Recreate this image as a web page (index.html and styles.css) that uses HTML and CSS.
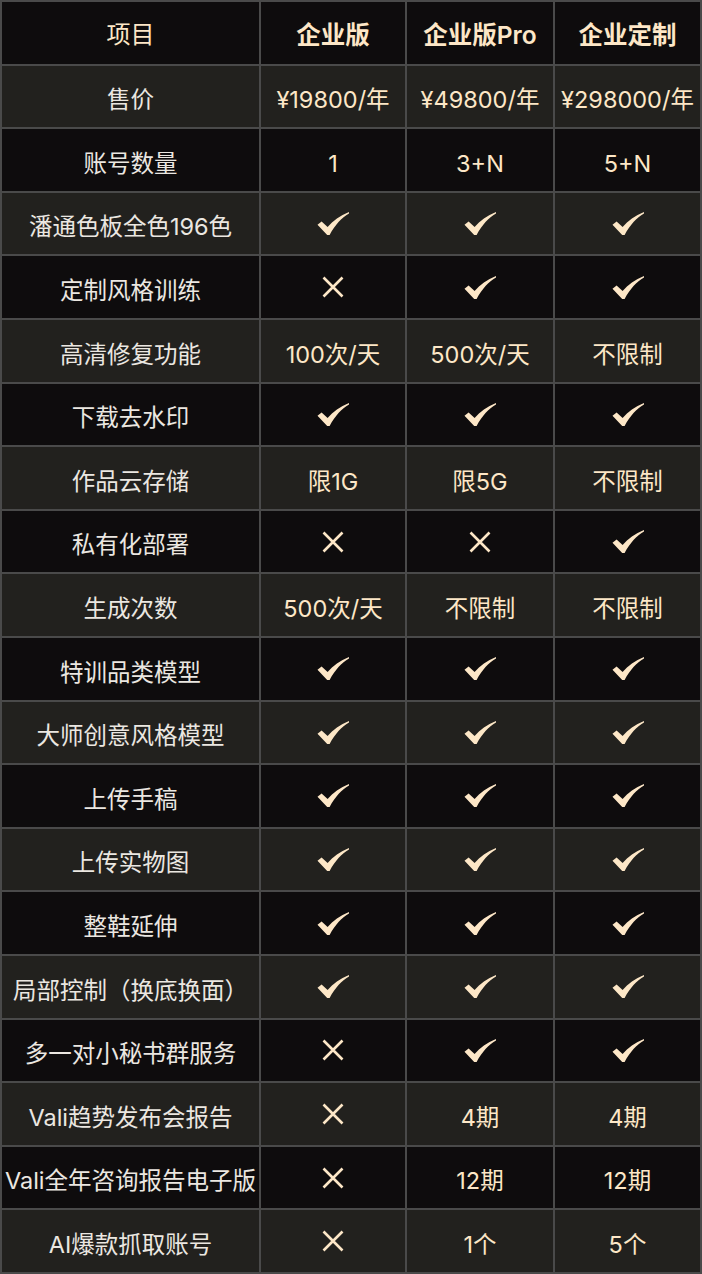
FILE: index.html
```html
<!DOCTYPE html>
<html lang="zh">
<head>
<meta charset="utf-8">
<link rel="stylesheet" href="styles.css">
<title>企业版对比</title>
</head>
<body>
<svg width="0" height="0" style="position:absolute">
  <defs>
    <symbol id="ck" viewBox="0 0 32 23">
      <path d="M0.5,12.8 L4.6,9.6 L10.6,15 C16,8.6 23,3.6 32,0 L32,1.6 C24.5,6 18,13 12.6,23 L10.2,23 Z" fill="currentColor"/>
    </symbol>
    <symbol id="xx" viewBox="0 0 22 22">
      <path d="M1.5,1.5 L20.5,20.5 M20.5,1.5 L1.5,20.5" stroke="currentColor" stroke-width="2.6" fill="none"/>
    </symbol>
  </defs>
</svg>
<div class="grid">
  <div class="row head">
    <div class="cell first">项目</div>
    <div class="cell">企业版</div>
    <div class="cell">企业版Pro</div>
    <div class="cell">企业定制</div>
  </div>
  <div class="row">
    <div class="cell first">售价</div>
    <div class="cell">¥19800/年</div>
    <div class="cell">¥49800/年</div>
    <div class="cell">¥298000/年</div>
  </div>
  <div class="row">
    <div class="cell first">账号数量</div>
    <div class="cell">1</div>
    <div class="cell">3+N</div>
    <div class="cell">5+N</div>
  </div>
  <div class="row">
    <div class="cell first">潘通色板全色196色</div>
    <div class="cell"><svg class="ck"><use href="#ck"/></svg></div>
    <div class="cell"><svg class="ck"><use href="#ck"/></svg></div>
    <div class="cell"><svg class="ck"><use href="#ck"/></svg></div>
  </div>
  <div class="row">
    <div class="cell first">定制风格训练</div>
    <div class="cell"><svg class="xx"><use href="#xx"/></svg></div>
    <div class="cell"><svg class="ck"><use href="#ck"/></svg></div>
    <div class="cell"><svg class="ck"><use href="#ck"/></svg></div>
  </div>
  <div class="row">
    <div class="cell first">高清修复功能</div>
    <div class="cell">100次/天</div>
    <div class="cell">500次/天</div>
    <div class="cell">不限制</div>
  </div>
  <div class="row">
    <div class="cell first">下载去水印</div>
    <div class="cell"><svg class="ck"><use href="#ck"/></svg></div>
    <div class="cell"><svg class="ck"><use href="#ck"/></svg></div>
    <div class="cell"><svg class="ck"><use href="#ck"/></svg></div>
  </div>
  <div class="row">
    <div class="cell first">作品云存储</div>
    <div class="cell">限1G</div>
    <div class="cell">限5G</div>
    <div class="cell">不限制</div>
  </div>
  <div class="row">
    <div class="cell first">私有化部署</div>
    <div class="cell"><svg class="xx"><use href="#xx"/></svg></div>
    <div class="cell"><svg class="xx"><use href="#xx"/></svg></div>
    <div class="cell"><svg class="ck"><use href="#ck"/></svg></div>
  </div>
  <div class="row">
    <div class="cell first">生成次数</div>
    <div class="cell">500次/天</div>
    <div class="cell">不限制</div>
    <div class="cell">不限制</div>
  </div>
  <div class="row">
    <div class="cell first">特训品类模型</div>
    <div class="cell"><svg class="ck"><use href="#ck"/></svg></div>
    <div class="cell"><svg class="ck"><use href="#ck"/></svg></div>
    <div class="cell"><svg class="ck"><use href="#ck"/></svg></div>
  </div>
  <div class="row">
    <div class="cell first">大师创意风格模型</div>
    <div class="cell"><svg class="ck"><use href="#ck"/></svg></div>
    <div class="cell"><svg class="ck"><use href="#ck"/></svg></div>
    <div class="cell"><svg class="ck"><use href="#ck"/></svg></div>
  </div>
  <div class="row">
    <div class="cell first">上传手稿</div>
    <div class="cell"><svg class="ck"><use href="#ck"/></svg></div>
    <div class="cell"><svg class="ck"><use href="#ck"/></svg></div>
    <div class="cell"><svg class="ck"><use href="#ck"/></svg></div>
  </div>
  <div class="row">
    <div class="cell first">上传实物图</div>
    <div class="cell"><svg class="ck"><use href="#ck"/></svg></div>
    <div class="cell"><svg class="ck"><use href="#ck"/></svg></div>
    <div class="cell"><svg class="ck"><use href="#ck"/></svg></div>
  </div>
  <div class="row">
    <div class="cell first">整鞋延伸</div>
    <div class="cell"><svg class="ck"><use href="#ck"/></svg></div>
    <div class="cell"><svg class="ck"><use href="#ck"/></svg></div>
    <div class="cell"><svg class="ck"><use href="#ck"/></svg></div>
  </div>
  <div class="row">
    <div class="cell first">局部控制（换底换面）</div>
    <div class="cell"><svg class="ck"><use href="#ck"/></svg></div>
    <div class="cell"><svg class="ck"><use href="#ck"/></svg></div>
    <div class="cell"><svg class="ck"><use href="#ck"/></svg></div>
  </div>
  <div class="row">
    <div class="cell first">多一对小秘书群服务</div>
    <div class="cell"><svg class="xx"><use href="#xx"/></svg></div>
    <div class="cell"><svg class="ck"><use href="#ck"/></svg></div>
    <div class="cell"><svg class="ck"><use href="#ck"/></svg></div>
  </div>
  <div class="row">
    <div class="cell first">Vali趋势发布会报告</div>
    <div class="cell"><svg class="xx"><use href="#xx"/></svg></div>
    <div class="cell">4期</div>
    <div class="cell">4期</div>
  </div>
  <div class="row">
    <div class="cell first">Vali全年咨询报告电子版</div>
    <div class="cell"><svg class="xx"><use href="#xx"/></svg></div>
    <div class="cell">12期</div>
    <div class="cell">12期</div>
  </div>
  <div class="row">
    <div class="cell first">AI爆款抓取账号</div>
    <div class="cell"><svg class="xx"><use href="#xx"/></svg></div>
    <div class="cell">1个</div>
    <div class="cell">5个</div>
  </div>
</div>
</body>
</html>
```

FILE: styles.css
```css
html, body {
  margin: 0;
  padding: 0;
  background: #0e0c0d;
}

.grid {
  box-sizing: border-box;
  width: 702px;
  height: 1274px;
  padding: 2px;
  background: #4a4a4a;
  display: grid;
  grid-template-columns: 257px 144px 146px 145px;
  grid-template-rows: repeat(20, 1fr);
  gap: 2px;
  font-family: "Inter", "Noto Sans CJK SC", sans-serif;
  font-size: 23.5px;
  line-height: 1;
  color: #fde7c7;
}

.row {
  display: contents;
}

.cell {
  display: flex;
  align-items: center;
  justify-content: center;
  background: #0e0c0d;
  white-space: nowrap;
  overflow: hidden;
  padding-top: 7px;
}

.row:nth-child(even) .cell {
  background: #22211e;
}

.cell.first {
  color: #ebe7e1;
}

.head .cell {
  font-weight: 600;
  font-size: 24.5px;
  padding-top: 5px;
}

.head .cell.first {
  font-weight: normal;
  color: #fde7c7;
  font-size: 24px;
}

.ck {
  width: 32px;
  height: 23px;
  margin-top: -7px;
  color: #fde7c7;
}

.xx {
  width: 22px;
  height: 22px;
  margin-top: -7px;
  color: #fde7c7;
}
```
